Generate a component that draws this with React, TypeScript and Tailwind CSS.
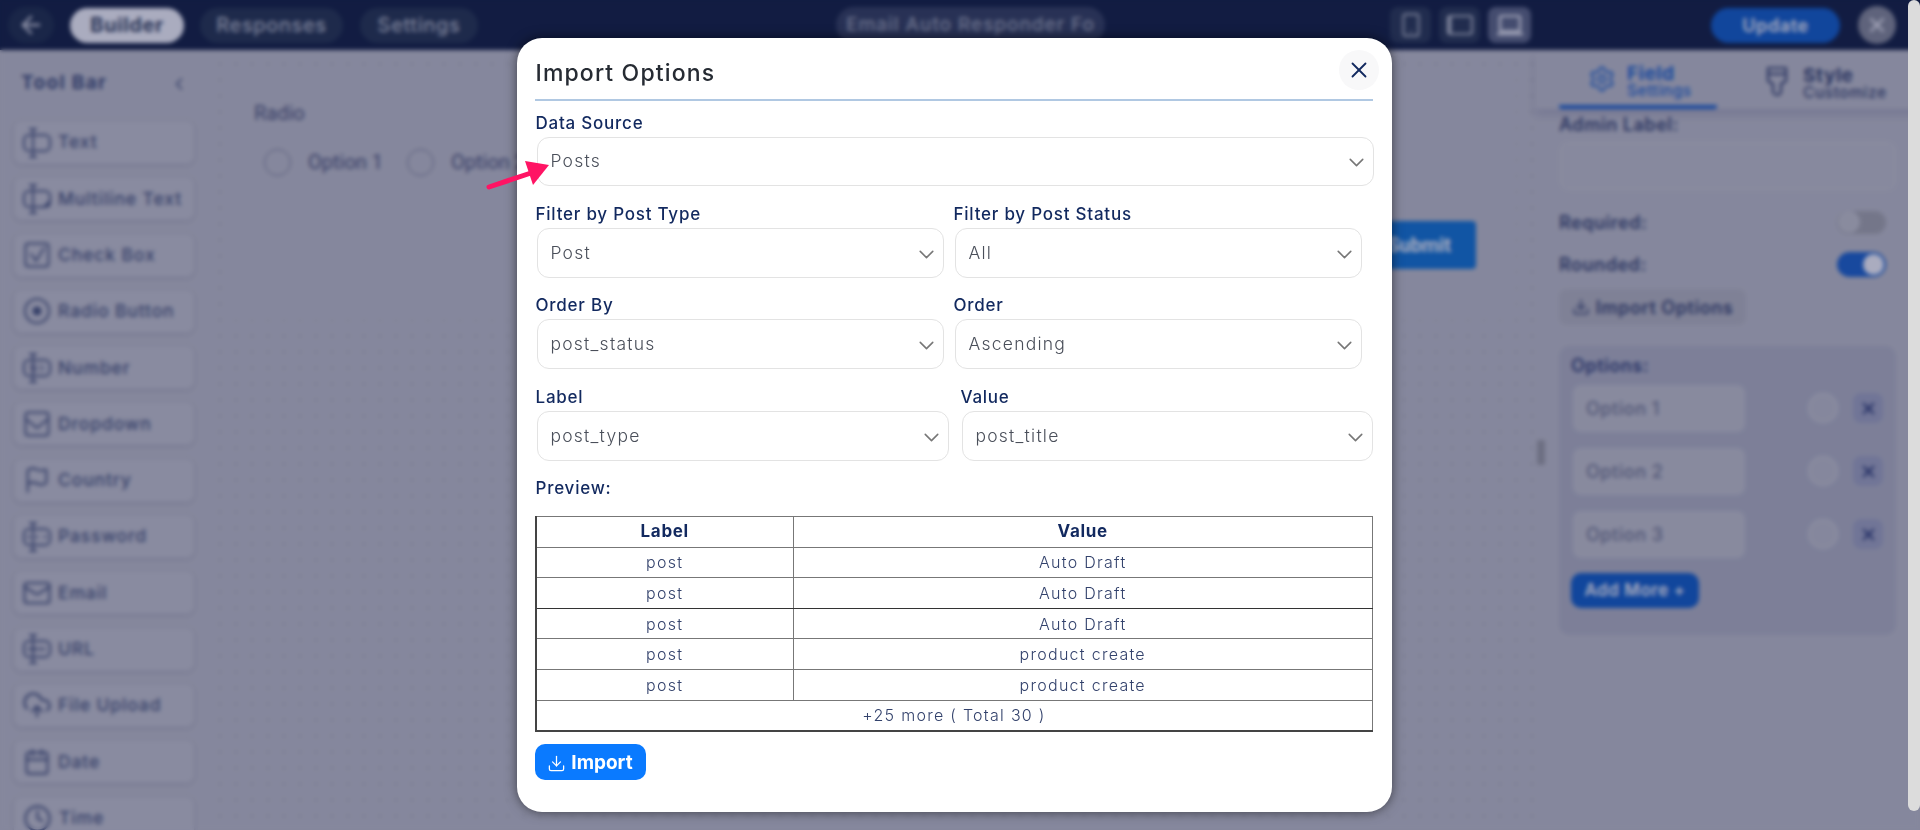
import { ArrowLeft, ChevronDown, ChevronLeft, CloudUpload, Calendar, Clock, Download, Flag, Mail, Settings, Smartphone, X } from "lucide-react";
import type { ReactNode } from "react";

const font = "font-['Inter','Noto_Sans',sans-serif]";

// text cursor box, used by several tool bar icons
const CursorBox = ({ inner }: { inner?: ReactNode }) => (
  <svg className="w-[28px] h-[30px] shrink-0" viewBox="0 0 28 30" fill="none" stroke="currentColor" strokeWidth="2" strokeLinecap="round">
    <path d="M8 7H6a5 5 0 0 0-5 5v6a5 5 0 0 0 5 5h2M12 7h10a5 5 0 0 1 5 5v6a5 5 0 0 1-5 5H12" />
    <path d="M10 1v28M7 1h6M7 29h6" />
    {inner}
  </svg>
);

const DropdownIcon = () => (
  <svg className="w-[28px] h-[28px] shrink-0" viewBox="0 0 28 28" fill="none" stroke="currentColor" strokeWidth="2" strokeLinecap="round" strokeLinejoin="round">
    <rect x="2.5" y="2.5" width="23" height="23" rx="3" />
    <path d="M3 9l11 9 11-9" />
  </svg>
);

const CheckIcon = () => (
  <svg className="w-[28px] h-[28px] shrink-0" viewBox="0 0 28 28" fill="none" stroke="currentColor" strokeWidth="2" strokeLinecap="round" strokeLinejoin="round">
    <rect x="2.5" y="2.5" width="23" height="23" rx="3" />
    <path d="M8 13l5 7 8-13" />
  </svg>
);

const RadioIcon = () => (
  <svg className="w-[28px] h-[28px] shrink-0" viewBox="0 0 28 28" fill="none" stroke="currentColor" strokeWidth="2">
    <circle cx="14" cy="14" r="12" />
    <circle cx="14" cy="14" r="4.5" fill="currentColor" stroke="none" />
  </svg>
);

const tools: { name: string; icon: ReactNode }[] = [
  { name: "Text", icon: <CursorBox /> },
  { name: "Multiline Text", icon: <CursorBox inner={<path d="M26 18v4h-4z" fill="currentColor" />} /> },
  { name: "Check Box", icon: <CheckIcon /> },
  { name: "Radio Button", icon: <RadioIcon /> },
  { name: "Number", icon: <CursorBox inner={<text x="14" y="18" fontSize="8" textAnchor="middle" stroke="none" fill="currentColor">123</text>} /> },
  { name: "Dropdown", icon: <DropdownIcon /> },
  { name: "Country", icon: <Flag className="w-[28px] h-[28px] shrink-0" strokeWidth={1.8} /> },
  { name: "Password", icon: <CursorBox inner={<path d="M6 15h.01M14 15h.01M22 15h.01" strokeWidth="2.8" />} /> },
  { name: "Email", icon: <Mail className="w-[30px] h-[30px] shrink-0 -mx-[1px]" strokeWidth={1.7} /> },
  { name: "URL", icon: <CursorBox inner={<path d="M5 15h18" strokeWidth="3" strokeDasharray="2 1" strokeLinecap="butt" />} /> },
  { name: "File Upload", icon: <CloudUpload className="w-[30px] h-[30px] shrink-0 -mx-[1px]" strokeWidth={1.8} /> },
  { name: "Date", icon: <Calendar className="w-[28px] h-[28px] shrink-0" strokeWidth={1.8} /> },
  { name: "Time", icon: <Clock className="w-[29px] h-[29px] shrink-0" strokeWidth={1.8} /> },
];

const rows = [
  ["post", "Auto Draft"],
  ["post", "Auto Draft"],
  ["post", "Auto Draft"],
  ["post", "product create"],
  ["post", "product create"],
];

const Field = ({ label, value, className, h = "h-[50px]" }: { label: string; value: string; className: string; h?: string }) => (
  <div className={className}>
    <div className="pl-[1px] h-[22px] leading-[22px] text-[17px] font-medium tracking-[0.045em] text-[#12295f] mb-[3px] whitespace-nowrap">{label}</div>
    <div className={`ml-[2px] ${h} flex items-center justify-between pl-[13px] pr-[4px] bg-white border border-[#e3e3e3] rounded-[12px] text-[17.5px] font-light tracking-[0.07em] text-[#4a4f5a]`}>
      <span>{value}</span>
      <ChevronDown className="w-[25px] h-[25px] text-[#777] mt-[2px]" strokeWidth={1.5} />
    </div>
  </div>
);

function Page() {
  return (
    <div className="w-full h-full flex flex-col bg-[#c2c2c6]">
      <header className="h-[50px] shrink-0 flex items-center bg-[#02102f] text-[#b6bdc3] text-[20px] font-medium tracking-[0.03em]">
        <div className="ml-[8px] w-[46px] h-[36px] rounded-full bg-[#0f2039] flex items-center justify-center text-[#d5d8dc]">
          <ArrowLeft className="w-[28px] h-[28px]" strokeWidth={2} />
        </div>
        <div className="ml-[16px] w-[114px] h-[35px] rounded-full bg-white text-[#27344f] font-bold flex items-center justify-center">Builder</div>
        <div className="ml-[16px] w-[143px] h-[35px] rounded-full bg-[#16273f] flex items-center justify-center">Responses</div>
        <div className="ml-[17px] w-[118px] h-[35px] rounded-full bg-[#16273f] flex items-center justify-center">Settings</div>
        <div className="ml-[358px] w-[269px] h-[36px] rounded-full bg-[#27334f] text-[19px] tracking-[0.05em] text-[#9ba2ae] flex items-center justify-center overflow-hidden whitespace-nowrap">Email Auto Responder Fo</div>
        <div className="ml-[285px] flex gap-[8px]">
          <div className="w-[41px] h-[36px] rounded-[8px] bg-[#1b2b44] flex items-center justify-center"><Smartphone className="w-[26px] h-[26px]" strokeWidth={1.8} /></div>
          <div className="w-[41px] h-[36px] rounded-[8px] bg-[#1b2b44] flex items-center justify-center">
            <svg className="w-[28px] h-[24px]" viewBox="0 0 28 24" fill="none" stroke="currentColor" strokeWidth="2.2">
              <rect x="2" y="3" width="24" height="18" rx="2" />
              <path d="M4 4v16" strokeWidth="3" />
            </svg>
          </div>
          <div className="w-[43px] h-[36px] rounded-[8px] bg-[#56607a] flex items-center justify-center text-white">
            <svg className="w-[28px] h-[24px]" viewBox="0 0 28 24" fill="none" stroke="currentColor" strokeWidth="2.2">
              <rect x="4" y="3" width="20" height="15" rx="1.5" />
              <path d="M1 21h26" strokeWidth="2.6" />
            </svg>
          </div>
        </div>
        <div className="ml-[180px] w-[129px] h-[35px] rounded-full bg-[#0055c5] text-white text-[18px] font-semibold flex items-center justify-center">Update</div>
        <div className="ml-[18px] w-[38px] h-[38px] rounded-full bg-[#82868f] text-white flex items-center justify-center"><X className="w-[24px] h-[24px]" strokeWidth={2} /></div>
      </header>

      <div className="flex flex-1 min-h-0">
        <aside className="w-[205px] shrink-0 overflow-hidden text-[#404d71] px-[14px]">
          <div className="h-[71px] flex items-center justify-between pl-[7px] pr-[2px] font-bold text-[19px] tracking-[0.07em] text-[#33426b] whitespace-nowrap">
            <span className="mt-[-4px]">Tool Bar</span>
            <ChevronLeft className="w-[20px] h-[20px] mt-[-4px]" strokeWidth={1.8} />
          </div>
          <div className="flex flex-col gap-[13.3px] w-[180px]">
            {tools.map((t) => (
              <div key={t.name} className="h-[43px] shrink-0 flex items-center gap-[7px] pl-[9px] rounded-[8px] bg-[#c8c8cb] shadow-[0_1px_4px_rgba(0,0,40,0.18)] text-[17.5px] font-medium tracking-[0.05em] whitespace-nowrap">
                {t.icon}
                <span>{t.name}</span>
              </div>
            ))}
          </div>
        </aside>

        <main className="w-[1330px] shrink-0 pt-[22px] px-[19px] bg-[radial-gradient(#a2a2a6_1px,transparent_1.2px)] bg-[length:16px_16px] bg-[position:7px_6px]">
          <div className="relative h-[248px] bg-[#c2c2c6] pl-[30px] font-['Roboto',sans-serif] text-[#40486a]">
            <div className="pt-[30px] text-[20px] leading-[22px]">Radio</div>
            <div className="mt-[23px] ml-[10px] flex items-center text-[20px]">
              <span className="w-[27px] h-[27px] rounded-full border border-[#6f7388]" />
              <span className="ml-[17px] w-[99px]">Option 1</span>
              <span className="w-[27px] h-[27px] rounded-full border border-[#6f7388]" />
              <span className="ml-[17px]">Option 2</span>
            </div>
            <div className="absolute right-[40px] top-[149px] w-[114px] h-[48px] rounded-[4px] bg-[#006ed2] text-white text-[20px] font-bold flex items-center justify-center">Submit</div>
          </div>
        </main>

        <aside className="relative flex-1 text-[#2c3a63] text-[18px] font-semibold tracking-[0.03em]">
          <div className="absolute left-[2px] top-[390px] w-[8px] h-[25px] rounded-[2px] bg-[#9a9a9a]" />
          <div className="h-[59px] flex shadow-[0_6px_8px_rgba(30,30,90,0.15)]">
            <div className="ml-[24px] w-[158px] border-b-[4px] border-[#0c5ac8] rounded-b-[3px] flex items-center pl-[29px] gap-[11px] text-[#0c5ac8]">
              <Settings className="w-[28px] h-[28px] mt-[3px]" strokeWidth={1.6} />
              <div className="mt-[8px]">
                <div className="h-[18px] leading-[18px] text-[19px] font-bold">Field</div>
                <div className="h-[16px] leading-[16px] text-[15.5px] font-medium">Settings</div>
              </div>
            </div>
            <div className="ml-[48px] flex items-center gap-[14px] text-[#2c3a63]">
              <svg className="w-[24px] h-[32px] mt-[2px]" viewBox="0 0 24 32" fill="none" stroke="currentColor" strokeWidth="2.2" strokeLinejoin="round">
                <path d="M3 3h18v13l-5 3v7a4 4 0 0 1-8 0v-7l-5-3z" />
                <path d="M3 9h18" />
              </svg>
              <div className="mt-[8px]">
                <div className="h-[18px] leading-[18px] text-[19px] font-bold">Style</div>
                <div className="h-[16px] leading-[16px] text-[15.5px] font-medium">Customize</div>
              </div>
            </div>
          </div>
          <div className="pl-[24px] pr-[24px]">
            <div className="mt-[6px] h-[20px] leading-[20px]">Admin Label:</div>
            <div className="mt-[7px] ml-[1px] h-[48px] rounded-[8px] border border-[#cfcfcf] bg-[#c5c5c8]" />
            <div className="mt-[21px] h-[22px] flex items-center justify-between pr-[10px]">
              <span>Required:</span>
              <span className="w-[49px] h-[23px] rounded-full bg-[#a6a6a6] flex items-center pl-[1px]"><span className="w-[22px] h-[22px] rounded-full bg-[#c9c9c9]" /></span>
            </div>
            <div className="mt-[19px] h-[25px] flex items-center justify-between pr-[10px]">
              <span>Rounded:</span>
              <span className="w-[49px] h-[25px] rounded-full bg-[#0c5ac8] flex items-center justify-end pr-[2px]"><span className="w-[21px] h-[21px] rounded-full bg-white" /></span>
            </div>
            <div className="mt-[12px] w-[187px] h-[36px] rounded-[8px] bg-[#b8b8bb] flex items-center justify-center gap-[6px] whitespace-nowrap">
              <Download className="w-[18px] h-[18px]" strokeWidth={2} />
              <span>Import Options</span>
            </div>
            <div className="mt-[21px] h-[289px] rounded-[10px] bg-[#b4b5bf] pl-[12px] pr-[12px]">
              <div className="pt-[10px] h-[38px] leading-[20px] text-[#26356a]">Options:</div>
              {["Option 1", "Option 2", "Option 3"].map((o) => (
                <div key={o} className="flex items-center h-[48px] mb-[15px] ml-[2px]">
                  <div className="w-[172px] h-[47px] rounded-[8px] bg-[#c7c7c9] pl-[13px] flex items-center text-[#6c7186] font-medium">{o}</div>
                  <span className="ml-[63px] w-[30px] h-[30px] rounded-full border-2 border-[#cfcfcf] bg-[#c2c2c6]" />
                  <span className="ml-[15px] w-[30px] h-[30px] rounded-[8px] bg-[#a0a4bc] flex items-center justify-center text-[#1b2c66]"><X className="w-[19px] h-[19px]" strokeWidth={2.6} /></span>
                </div>
              ))}
              <div className="w-[128px] h-[35px] rounded-[10px] bg-[#0055c5] text-white text-[17px] flex items-center justify-center whitespace-nowrap">Add More +</div>
            </div>
          </div>
        </aside>
      </div>
    </div>
  );
}

function ImportModal() {
  return (
    <div className="relative w-[875px] h-[774px] rounded-[25px] bg-white pl-[18px] pr-[19px] shadow-[0_0_12px_rgba(0,0,0,0.55)]">
      <div className="h-[63px] flex items-center justify-between border-b-2 border-[#b0c8e2] pt-[10px]">
        <h2 className="pl-[1px] text-[23px] font-medium tracking-[0.05em] text-[#262b33]">Import Options</h2>
      </div>
      <button className="absolute top-[12px] right-[13px] w-[40px] h-[40px] rounded-full bg-[#f8f8f9] flex items-center justify-center text-[#12295f]">
        <X className="w-[26px] h-[26px]" strokeWidth={1.7} />
      </button>

      <Field label="Data Source" value="Posts" className="mt-[11px] w-[839px]" h="h-[49px]" />
      <div className="mt-[17px] flex gap-[9px]">
        <Field label="Filter by Post Type" value="Post" className="w-[409px]" />
        <Field label="Filter by Post Status" value="All" className="w-[409px]" />
      </div>
      <div className="mt-[16px] flex gap-[9px]">
        <Field label="Order By" value="post_status" className="w-[409px]" />
        <Field label="Order" value="Ascending" className="w-[409px]" />
      </div>
      <div className="mt-[17px] flex gap-[11px]">
        <Field label="Label" value="post_type" className="w-[415px]" />
        <Field label="Value" value="post_title" className="w-[414px]" />
      </div>

      <div className="mt-[16px] pl-[1px] h-[22px] leading-[22px] text-[17px] font-medium tracking-[0.045em] text-[#12295f]">Preview:</div>

      <table className="mt-[17px] w-[838px] table-fixed border-collapse text-center text-[16px] font-light tracking-[0.08em] text-[#33426c] border-b-2 border-l-2 border-[#444]">
        <thead>
          <tr className="h-[30.6px]">
            <th className="w-[258px] border border-[#777] font-bold text-[17px] tracking-[0.04em] text-[#12295f]">Label</th>
            <th className="border border-[#777] font-bold text-[17px] tracking-[0.04em] text-[#12295f]">Value</th>
          </tr>
        </thead>
        <tbody>
          {rows.map((r, i) => (
            <tr key={i} className="h-[30.6px]">
              <td className={`border border-[#777] ${i === 1 ? "border-b-[#333]" : ""}`}>{r[0]}</td>
              <td className={`border border-[#777] ${i === 1 ? "border-b-[#333]" : ""}`}>{r[1]}</td>
            </tr>
          ))}
          <tr className="h-[30.6px]">
            <td colSpan={2} className="border border-[#777]">+25 more ( Total 30 )</td>
          </tr>
        </tbody>
      </table>

      <button className="mt-[12px] w-[111px] h-[36px] pt-[3px] rounded-[10px] bg-[#0a7aff] text-white text-[19px] font-bold flex items-center justify-center gap-[5px]">
        <Download className="w-[19px] h-[19px]" strokeWidth={1.6} />
        Import
      </button>

      {/* annotation arrow on top of the modal edge */}
      <svg className="absolute left-[-32px] top-[120px] w-[70px] h-[36px]" viewBox="0 0 70 36" fill="none">
        <path d="M4 29L52 13" stroke="#ff1464" strokeWidth="5" strokeLinecap="round" />
        <path d="M40 3L64 7L48 27z" fill="#ff1464" />
      </svg>
    </div>
  );
}

export default function App() {
  return (
    <div className={`relative w-full h-[830px] overflow-hidden ${font}`}>
      <Page />
      <div className="absolute inset-0 flex justify-center pr-[12px] pt-[38px] backdrop-blur-[2px] bg-[rgba(42,47,95,0.4)]">
        <ImportModal />
      </div>
      {/* page scrollbar thumb */}
      <div className="absolute right-0 top-0 w-[12px] h-[811px] rounded-full bg-[#dcdcdc]" />
    </div>
  );
}
